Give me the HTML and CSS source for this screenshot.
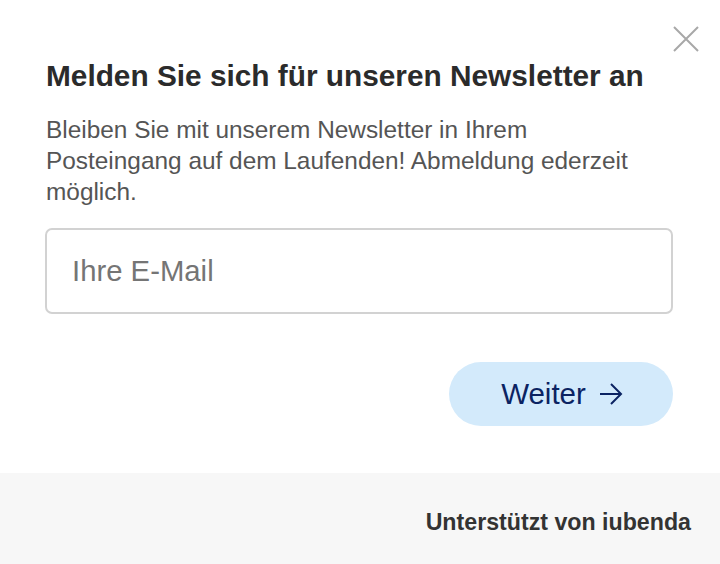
FILE: index.html
```html
<!DOCTYPE html>
<html>
<head>
    <meta charset="utf-8">
    <link rel="stylesheet" href="styles.css">
</head>
<body>
    <div class="popup">
        <button class="close" aria-label="Schließen">
            <svg width="26" height="26" viewBox="0 0 26 26">
                <path d="M1 1 L25 25 M25 1 L1 25" stroke="#a8a8a8" stroke-width="2" fill="none"/>
            </svg>
        </button>
        <div class="content">
            <h1 class="title">Melden Sie sich für unseren Newsletter an</h1>
            <p class="text">Bleiben Sie mit unserem Newsletter in Ihrem Posteingang auf dem Laufenden! Abmeldung ederzeit möglich.</p>
            <input class="email" type="email" placeholder="Ihre E-Mail">
            <div class="actions">
                <button class="next">
                    Weiter
                    <svg width="24" height="22" viewBox="0 0 24 22">
                        <path d="M1 11 H22 M12 1 L22 11 L12 21" stroke="#0b2362" stroke-width="2" fill="none"/>
                    </svg>
                </button>
            </div>
        </div>
        <div class="footer">Unterstützt von iubenda</div>
    </div>
</body>
</html>
```

FILE: styles.css
```css
html,
body {
    margin: 0;
    height: 100%;
    background: #fff;
    font-family: "Liberation Sans", Arial, sans-serif;
}

.popup {
    position: relative;
    width: 720px;
    height: 564px;
    display: flex;
    flex-direction: column;
}

.close {
    position: absolute;
    top: 26px;
    right: 21px;
    padding: 0;
    border: 0;
    background: none;
    line-height: 0;
}

.content {
    flex: 1;
    padding: 58px 47px 0 45px;
}

.title {
    margin: 0;
    font-size: 29.8px;
    line-height: 36px;
    font-weight: bold;
    color: #2b2b2b;
    padding-left: 1px;
    white-space: nowrap;
}

.text {
    max-width: 605px;
    margin: 20px 0 0;
    font-size: 24.4px;
    line-height: 31px;
    color: #555;
    padding-left: 1px;
}

.email {
    display: block;
    box-sizing: border-box;
    width: 628px;
    height: 86px;
    margin-top: 21px;
    padding: 0 25px;
    border: 2px solid #d2d2d2;
    border-radius: 7px;
    font-family: inherit;
    font-size: 29.3px;
    color: #333;
    outline: none;
}

.email::placeholder {
    color: #757575;
}

.actions {
    display: flex;
    justify-content: flex-end;
    margin-top: 48px;
}

.next {
    display: flex;
    align-items: center;
    justify-content: center;
    gap: 13px;
    width: 224px;
    height: 64px;
    padding: 0 0 0 2px;
    border: 0;
    border-radius: 32px;
    background: #d3eafb;
    color: #0b2362;
    font-family: inherit;
    font-size: 29.5px;
}

.footer {
    height: 91px;
    background: #f7f7f7;
    box-sizing: border-box;
    padding: 36px 29px 0 0;
    text-align: right;
    font-size: 23.2px;
    font-weight: bold;
    color: #333;
}
```
